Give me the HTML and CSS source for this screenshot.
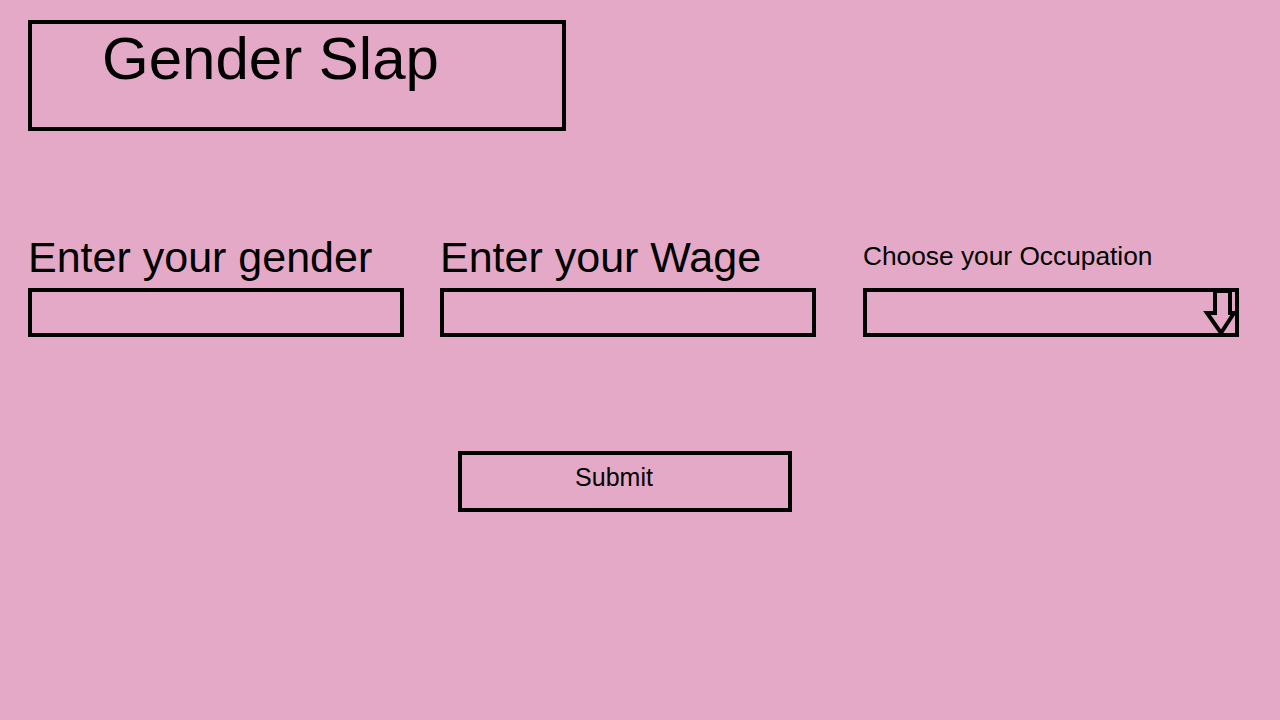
FILE: index.html
```html
<!DOCTYPE html>
<html>

<head>
  <title>Gender Slap</title>
  <link rel="stylesheet" href="styles.css">
</head>

<body>
  <div class="title-box">
    <h1>Gender Slap</h1>
  </div>

  <form id="slapForm">
    <div class="fields">
      <div class="field field-gender">
        <label for="gender">Enter your gender</label>
        <input type="text" id="gender" name="gender">
      </div>
      <div class="field field-wage">
        <label for="wage">Enter your Wage</label>
        <input type="text" id="wage" name="wage">
      </div>
      <div class="field field-job">
        <label for="job" class="small-label">Choose your Occupation</label>
        <div class="select-wrap">
          <select id="job" name="job">
            <option value=""></option>
          </select>
          <!-- hollow down arrow drawn over the select -->
          <svg class="select-arrow" width="36" height="48" viewBox="0 0 36 48">
            <polygon points="12,2 27,2 27,24 31,24 18,44 4,24 12,24" fill="none" stroke="#000" stroke-width="4" stroke-linejoin="miter" />
          </svg>
        </div>
      </div>
    </div>
    <button type="submit" class="submit-button">Submit</button>
  </form>
</body>

</html>
```
FILE: styles.css
```css
/* Gender Slap page */
body {
  margin: 0;
  font-family: "Liberation Sans", Arial, sans-serif;
  background-color: #e4a9c7;
  color: #000000;
}

.title-box {
  box-sizing: border-box;
  width: 538px;
  height: 111px;
  margin: 20px 0 0 28px;
  border: 4px solid #000000;
}

.title-box h1 {
  margin: 0;
  padding-left: 70px;
  font-size: 60px;
  font-weight: normal;
  line-height: 69px;
}

.fields {
  display: flex;
  align-items: flex-start;
  margin-top: 102px;
  padding-left: 28px;
}

.field {
  display: flex;
  flex-direction: column;
  width: 376px;
}

.field-wage {
  margin-left: 36px;
}

.field-job {
  margin-left: 47px;
}

.field label {
  display: block;
  font-size: 43px;
  line-height: 49px;
  margin-bottom: 6px;
}

.field label.small-label {
  font-size: 26.3px;
  line-height: 30px;
  margin-top: 8px;
  margin-bottom: 17px;
}

.field input,
.field select {
  box-sizing: border-box;
  width: 376px;
  height: 49px;
  margin: 0;
  border: 4px solid #000000;
  border-radius: 0;
  background-color: transparent;
  font-family: inherit;
  font-size: 20px;
  outline: none;
}

.field select {
  appearance: none;
  -webkit-appearance: none;
}

.select-wrap {
  position: relative;
  width: 376px;
}

.select-arrow {
  position: absolute;
  top: 1px;
  right: 0;
  pointer-events: none;
}

.submit-button {
  display: block;
  box-sizing: border-box;
  width: 334px;
  height: 61px;
  margin: 114px 0 0 458px;
  padding: 0 22px 8px 0;
  border: 4px solid #000000;
  border-radius: 0;
  background-color: transparent;
  font-family: inherit;
  font-size: 25px;
  color: #000000;
  cursor: pointer;
}
```
